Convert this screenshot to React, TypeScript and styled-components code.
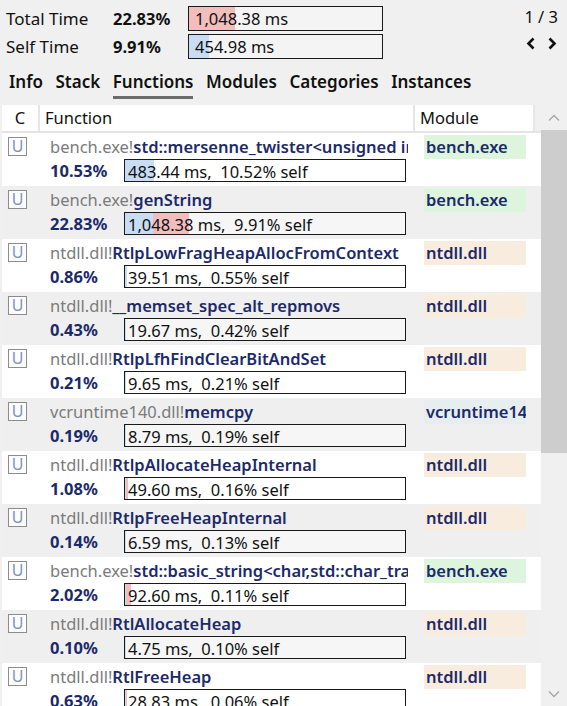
import React from "react";
import styled, { createGlobalStyle } from "styled-components";

const Global = createGlobalStyle`
  html, body { margin: 0; padding: 0; background: #f0f0f0; }
  body { font-family: "Noto Sans", "Open Sans", sans-serif; font-size: 16.5px; color: #111; overflow: hidden; }
  #root { height: 706px; }
`;

const Page = styled.div`
  height: 706px;
  display: flex;
  flex-direction: column;
`;

const Top = styled.div`
  display: flex;
  justify-content: space-between;
  padding: 6px 9px 0 6px;
`;

const Stats = styled.div`
  display: grid;
  grid-template-columns: 107px 75px 195px;
  grid-auto-rows: 25px;
  row-gap: 3px;
  align-items: center;
`;

const StatLabel = styled.span`
  font-size: 17px;
  line-height: 25px;
`;

const StatPct = styled.span`
  font-weight: 700;
  font-size: 16.5px;
  line-height: 25px;
`;

const StatBar = styled.div`
  position: relative;
  height: 25px;
  box-sizing: border-box;
  border: 1px solid #1a1a1a;
  background: #f4f4f4;
  overflow: hidden;
`;

const Fill = styled.div<{ $c: string }>`
  position: absolute;
  top: 0;
  bottom: 0;
  background: ${(p) => p.$c};
`;

const BarText = styled.span<{ $pad?: number }>`
  position: relative;
  padding-left: ${(p) => p.$pad ?? 3}px;
  font-size: 16.5px;
  line-height: 23px;
  white-space: pre;
`;

const Pager = styled.div`
  display: flex;
  flex-direction: column;
  align-items: flex-end;
`;

const PageNum = styled.span`
  font-size: 16.5px;
  line-height: 20px;
  margin-top: 1px;
`;

const Arrows = styled.div`
  display: flex;
  gap: 9px;
  margin-top: 10px;
  margin-right: 1px;
`;

const Tabs = styled.div`
  display: flex;
  padding: 12px 0 0 9px;
  box-sizing: border-box;
`;

const Tab = styled.div<{ $active?: boolean }>`
  font-weight: 600;
  font-size: 17px;
  line-height: 22px;
  margin-right: 12.5px;
  height: 28px;
  box-sizing: border-box;
  border-bottom: 3px solid ${(p) => (p.$active ? "#6b6b6b" : "transparent")};
`;

const TableWrap = styled.div`
  flex: 1;
  display: flex;
  margin-top: 6px;
  min-height: 0;
  padding-left: 2px;
`;

const Table = styled.div`
  width: 539px;
  overflow: hidden;
  background: #efefef;
`;

const HeadRow = styled.div`
  display: grid;
  grid-template-columns: 38px 375px 120px 6px;
  height: 28px;
  background: #fbfbfb;
  border-bottom: 2px solid #e4e4e4;
  box-sizing: border-box;
`;

const HeadCell = styled.div<{ $center?: boolean }>`
  font-size: 16.5px;
  line-height: 26px;
  padding-left: ${(p) => (p.$center ? "0" : "5px")};
  text-align: ${(p) => (p.$center ? "center" : "left")};
  border-right: 2px solid #e6e6e6;
  background: #fff;
`;

const HeadFill = styled.div`
  background: #f0f0f0;
`;

const Row = styled.div<{ $alt: boolean }>`
  display: grid;
  grid-template-columns: 38px 375px 126px;
  height: 53px;
  background: ${(p) => (p.$alt ? "#efefef" : "#ffffff")};
`;

const CheckCell = styled.div`
  padding: 4px 0 0 6px;
`;

const UBox = styled.div`
  width: 19px;
  height: 19px;
  box-sizing: border-box;
  border: 1px solid #8c8c8c;
  background: #fdfdfd;
  color: #8193bb;
  font-size: 16px;
  font-weight: 400;
  line-height: 16px;
  text-align: center;
`;

const FuncCell = styled.div`
  padding: 2px 0 0 10px;
  overflow: hidden;
  min-width: 0;
`;

const NameLine = styled.div`
  height: 24px;
  line-height: 24px;
  font-size: 16.5px;
  white-space: nowrap;
  overflow: hidden;
  width: 358px;
`;

const ModPrefix = styled.span`
  color: #7b7b7b;
`;

const FuncName = styled.span`
  color: #1c2a6a;
  font-weight: 600;
`;

const StatLine = styled.div`
  display: flex;
  align-items: center;
  height: 23px;
`;

const RowPct = styled.span`
  width: 74px;
  color: #1c2a6a;
  font-weight: 700;
  font-size: 16.5px;
  line-height: 23px;
`;

const RowBar = styled.div`
  position: relative;
  width: 282px;
  height: 23px;
  box-sizing: border-box;
  border: 1px solid #1a1a1a;
  background: rgba(255, 255, 255, 0.45);
  overflow: hidden;
  white-space: nowrap;
`;

const ModCell = styled.div`
  padding: 2px 0 0 9px;
`;

const Badge = styled.div<{ $bg: string }>`
  width: 102px;
  height: 24px;
  background: ${(p) => p.$bg};
  color: #1c2a6a;
  font-weight: 600;
  font-size: 16.5px;
  line-height: 24px;
  padding-left: 2px;
  box-sizing: border-box;
  overflow: hidden;
  white-space: nowrap;
`;

const Scroll = styled.div`
  width: 26px;
  display: flex;
  flex-direction: column;
  background: #f0f0f0;
`;

const ScrollBtn = styled.div`
  height: 25px;
  display: flex;
  align-items: center;
  justify-content: center;
`;

const Thumb = styled.div`
  height: 323px;
  background: #cdcdcd;
`;

const Track = styled.div`
  flex: 1;
`;

const Chevron = ({ dir, color, w = 1.3 }: { dir: "up" | "down"; color: string; w?: number }) => (
  <svg width="12" height="8" viewBox="0 0 12 8">
    <path
      d={dir === "up" ? "M1 6.5 L6 1.5 L11 6.5" : "M1 1.5 L6 6.5 L11 1.5"}
      fill="none"
      stroke={color}
      strokeWidth={w}
    />
  </svg>
);

const Arrow = ({ dir }: { dir: "left" | "right" }) => (
  <svg width="11" height="13" viewBox="0 0 11 13">
    <path
      d={dir === "left" ? "M7.5 1.5 L2.5 6.5 L7.5 11.5" : "M3.5 1.5 L8.5 6.5 L3.5 11.5"}
      fill="none"
      stroke="#111"
      strokeWidth={2.6}
    />
  </svg>
);

type Item = {
  mod: string;
  fn: string;
  total: number;
  self: number;
  ms: string;
  module: string;
};

const items: Item[] = [
  { mod: "bench.exe!", fn: "std::mersenne_twister<unsigned int,32,624,397,31,2567483615,11,4294967295,7>::operator()", total: 10.53, self: 10.52, ms: "483.44", module: "bench.exe" },
  { mod: "bench.exe!", fn: "genString", total: 22.83, self: 9.91, ms: "1,048.38", module: "bench.exe" },
  { mod: "ntdll.dll!", fn: "RtlpLowFragHeapAllocFromContext", total: 0.86, self: 0.55, ms: "39.51", module: "ntdll.dll" },
  { mod: "ntdll.dll!", fn: "__memset_spec_alt_repmovs", total: 0.43, self: 0.42, ms: "19.67", module: "ntdll.dll" },
  { mod: "ntdll.dll!", fn: "RtlpLfhFindClearBitAndSet", total: 0.21, self: 0.21, ms: "9.65", module: "ntdll.dll" },
  { mod: "vcruntime140.dll!", fn: "memcpy", total: 0.19, self: 0.19, ms: "8.79", module: "vcruntime140.dll" },
  { mod: "ntdll.dll!", fn: "RtlpAllocateHeapInternal", total: 1.08, self: 0.16, ms: "49.60", module: "ntdll.dll" },
  { mod: "ntdll.dll!", fn: "RtlpFreeHeapInternal", total: 0.14, self: 0.13, ms: "6.59", module: "ntdll.dll" },
  { mod: "bench.exe!", fn: "std::basic_string<char,std::char_traits<char>,std::allocator<char> >::_Construct", total: 2.02, self: 0.11, ms: "92.60", module: "bench.exe" },
  { mod: "ntdll.dll!", fn: "RtlAllocateHeap", total: 0.1, self: 0.1, ms: "4.75", module: "ntdll.dll" },
  { mod: "ntdll.dll!", fn: "RtlFreeHeap", total: 0.63, self: 0.06, ms: "28.83", module: "ntdll.dll" },
];

const badgeColor = (m: string) =>
  m === "bench.exe" ? "#ddf5dd" : m === "ntdll.dll" ? "#f8ecde" : "#e7eef0";

const BLUE = "#c8dcf3";
const RED = "#f2bdbd";

const Bar = ({ total, self, pad, children }: { total: number; self: number; pad?: number; children: React.ReactNode }) => (
  <>
    <Fill $c={RED} style={{ left: 0, width: `${total}%` }} />
    <Fill $c={BLUE} style={{ left: 0, width: `${self}%` }} />
    <BarText $pad={pad}>{children}</BarText>
  </>
);

export default function App() {
  return (
    <Page>
      <Global />
      <Top>
        <Stats>
          <StatLabel>Total Time</StatLabel>
          <StatPct>22.83%</StatPct>
          <StatBar>
            <Bar total={23.6} self={0} pad={6}>1,048.38 ms</Bar>
          </StatBar>
          <StatLabel>Self Time</StatLabel>
          <StatPct>9.91%</StatPct>
          <StatBar>
            <Bar total={0} self={10.3} pad={6}>454.98 ms</Bar>
          </StatBar>
        </Stats>
        <Pager>
          <PageNum>1 / 3</PageNum>
          <Arrows>
            <Arrow dir="left" />
            <Arrow dir="right" />
          </Arrows>
        </Pager>
      </Top>
      <Tabs>
        <Tab>Info</Tab>
        <Tab>Stack</Tab>
        <Tab $active>Functions</Tab>
        <Tab>Modules</Tab>
        <Tab>Categories</Tab>
        <Tab>Instances</Tab>
      </Tabs>
      <TableWrap>
        <Table>
          <HeadRow>
            <HeadCell $center>C</HeadCell>
            <HeadCell>Function</HeadCell>
            <HeadCell>Module</HeadCell>
            <HeadFill />
          </HeadRow>
          {items.map((it, i) => (
            <Row key={i} $alt={i % 2 === 1}>
              <CheckCell>
                <UBox>U</UBox>
              </CheckCell>
              <FuncCell>
                <NameLine>
                  <ModPrefix>{it.mod}</ModPrefix>
                  <FuncName>{it.fn}</FuncName>
                </NameLine>
                <StatLine>
                  <RowPct>{it.total.toFixed(2)}%</RowPct>
                  <RowBar>
                    <Bar total={it.total} self={it.self}>
                      {`${it.ms} ms,  ${it.self.toFixed(2)}% self`}
                    </Bar>
                  </RowBar>
                </StatLine>
              </FuncCell>
              <ModCell>
                <Badge $bg={badgeColor(it.module)}>{it.module}</Badge>
              </ModCell>
            </Row>
          ))}
        </Table>
        <Scroll>
          <ScrollBtn>
            <Chevron dir="up" color="#a6a6a6" />
          </ScrollBtn>
          <Thumb />
          <Track />
          <ScrollBtn>
            <Chevron dir="down" color="#a6a6a6" />
          </ScrollBtn>
        </Scroll>
      </TableWrap>
    </Page>
  );
}
